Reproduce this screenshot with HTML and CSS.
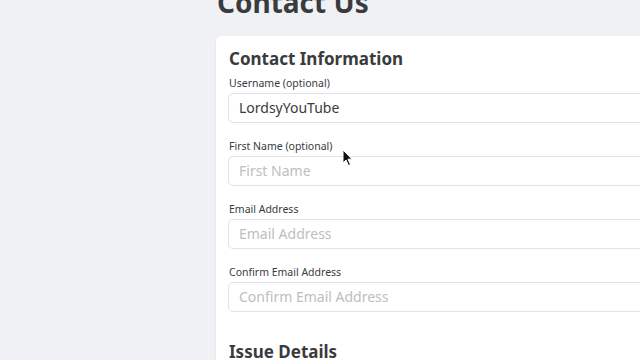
FILE: index.html
```html
<!DOCTYPE html>
<html lang="en">
<head>
<meta charset="utf-8">
<title>Contact Us</title>
<link rel="stylesheet" href="styles.css">
</head>
<body>
<div class="page">
  <h1 class="page-title">Contact Us</h1>
  <section class="card">
    <h2 class="section-title">Contact Information</h2>
    <div class="field">
      <label class="field-label">Username (optional)</label>
      <div class="input filled">LordsyYouTube</div>
    </div>
    <div class="field">
      <label class="field-label">First Name (optional)</label>
      <div class="input">First Name</div>
    </div>
    <div class="field">
      <label class="field-label">Email Address</label>
      <div class="input">Email Address</div>
    </div>
    <div class="field">
      <label class="field-label">Confirm Email Address</label>
      <div class="input">Confirm Email Address</div>
    </div>
    <h2 class="section-title issue">Issue Details</h2>
  </section>
</div>
<svg class="cursor" width="12" height="18" viewBox="0 0 12 18"><path d="M1 1 L1 14 L4 11 L6.5 16.5 L8.5 15.6 L6 10.2 L10 10.2 Z" fill="#111" stroke="#fff" stroke-width="1"/></svg>
</body>
</html>
```
FILE: styles.css
```css
html, body {
  margin: 0;
  padding: 0;
  background: #f0f1f5;
  overflow: hidden;
  height: 360px;
  font-family: "Noto Sans", "Liberation Sans", sans-serif;
  color: #393b3d;
}
.page {
  padding-left: 216px;
  position: relative;
}
.page-title {
  margin: -14px 0 18px 1px;
  font-size: 28px;
  line-height: 32px;
  font-weight: 700;
  color: #393b3d;
}
.card {
  width: 560px;
  background: #fff;
  border-radius: 5px 0 0 0;
  padding: 12px 0 40px 12px;
  box-shadow: -1px 0 2px rgba(0,0,0,0.04);
}
.section-title {
  margin: 0 0 6px 1px;
  font-size: 17px;
  line-height: 22px;
  font-weight: 700;
  color: #393b3d;
}
.field {
  display: flex;
  flex-direction: column;
  margin-bottom: 16px;
}
.field-label {
  font-size: 10.5px;
  line-height: 14px;
  margin: 0 0 3px 1px;
  color: #393b3d;
}
.input {
  height: 28px;
  border: 1px solid #e1e2e5;
  border-radius: 5px;
  padding: 0 10px;
  font-size: 14px;
  line-height: 28px;
  color: #bdbebe;
}
.input.filled {
  color: #393b3d;
}
.section-title.issue {
  margin-top: 29px;
}
.cursor {
  position: absolute;
  left: 342px;
  top: 149px;
}
```
